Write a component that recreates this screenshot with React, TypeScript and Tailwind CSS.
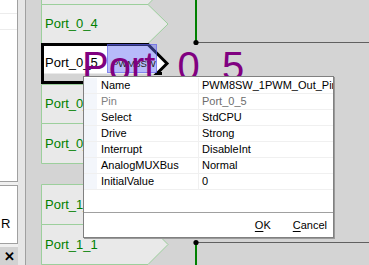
import React from "react";

const rows: { name: string; value: string; dim?: boolean }[] = [
  { name: "Name", value: "PWM8SW_1PWM_Out_Pin" },
  { name: "Pin", value: "Port_0_5", dim: true },
  { name: "Select", value: "StdCPU" },
  { name: "Drive", value: "Strong" },
  { name: "Interrupt", value: "DisableInt" },
  { name: "AnalogMUXBus", value: "Normal" },
  { name: "InitialValue", value: "0" },
];

function portPoints(top: number, bottom: number) {
  const mid = (top + bottom) / 2;
  return `15.5,${top + 0.5} 122,${top + 0.5} 142,${mid} 122,${bottom - 0.5} 15.5,${bottom - 0.5}`;
}

const ports: { label: string; top: number; bottom: number }[] = [
  { label: "Port_0_4", top: 4, bottom: 44 },
  { label: "Port_0_6", top: 84, bottom: 124 },
  { label: "Port_0_7", top: 123, bottom: 164 },
  { label: "Port_1_0", top: 184, bottom: 225 },
  { label: "Port_1_1", top: 224, bottom: 265 },
];

export default function App() {
  return (
    <div className="relative flex h-[265px] w-[369px] overflow-hidden bg-[#f0f0f0] font-['Liberation_Sans',Arial,sans-serif] text-black">
      {/* left panel */}
      <div className="flex w-[18px] flex-col bg-[#f0f0f0]">
        <div className="h-[182px] border-b border-r border-[#a0a0a0] bg-white">
          <div className="h-[14px] border-b border-[#ececec]" />
          <div className="h-[16px] border-b border-[#ececec]" />
        </div>
        <div className="mt-[3px] h-[59px] overflow-hidden border-b border-r border-t border-[#a0a0a0] bg-white pl-[1px] pt-[30px] text-[13px] leading-[15px]">
          R
        </div>
        <div className="mt-[3px] flex flex-1 items-center justify-center bg-[#d2d2d2] pl-[1px] text-[13px] font-bold leading-none">
          ✕
        </div>
      </div>
      {/* splitter */}
      <div className="w-[8px] border-r border-[#a0a0a0] bg-[#e6e6e6]" />
      {/* canvas */}
      <div className="relative flex-1 bg-[#d4d4d4]">
        <svg className="absolute left-0 top-0" width="343" height="265" viewBox="0 0 343 265">
          <polygon points="15.5,-36 122,-36 142,-16 122,4.5 15.5,4.5" fill="#e9e9e9" stroke="#9ccf9c" strokeWidth="1" />
          {ports.map((p) => (
            <polygon key={p.label} points={portPoints(p.top, p.bottom)} fill="#e9e9e9" stroke="#9ccf9c" strokeWidth="1" />
          ))}
          {/* selected port */}
          <polygon points="16.5,44.5 122,44.5 141,63.5 131,73.5 16.5,73.5" fill="#ffffff" stroke="none" />
          <polyline points="16.5,84 16.5,44.5 122,44.5 141,63.5 131,73.5 136,73.5" fill="none" stroke="#000" strokeWidth="3" />
          <polyline points="16.5,82.5 60,82.5" fill="none" stroke="#000" strokeWidth="3" />
          {/* wires */}
          <line x1="170" y1="0" x2="170" y2="42" stroke="#008000" strokeWidth="2" />
          <line x1="170" y1="42.5" x2="343" y2="42.5" stroke="#606060" strokeWidth="1" />
          <circle cx="170" cy="42.5" r="2.6" fill="#000" />
          <line x1="170" y1="242" x2="170" y2="265" stroke="#008000" strokeWidth="2" />
          <line x1="170" y1="242.5" x2="343" y2="242.5" stroke="#606060" strokeWidth="1" />
          <circle cx="170" cy="242.5" r="2.6" fill="#000" />
        </svg>
        {ports.map((p) => (
          <div
            key={p.label}
            className="absolute left-[19px] text-[13px] leading-[15px] text-[#008000]"
            style={{ top: (p.top + p.bottom) / 2 - 8 }}
          >
            {p.label}
          </div>
        ))}
        <div className="absolute left-[19px] top-[55px] text-[13px] leading-[15px] text-black">Port_0_5</div>
        {/* selection box */}
        <div className="absolute left-[81px] top-[44px] h-[29px] w-[50px] border border-[rgba(90,90,230,0.55)] bg-[rgba(95,105,245,0.45)]" />
        <div className="absolute left-[86px] top-[58px] text-[9.5px] leading-[11px] text-[#222]">PWM8SW</div>
        {/* big label */}
        <div className="absolute left-[56px] top-[46px] whitespace-nowrap text-[40px] leading-[40px] text-[#800080]">
          Port_0_5
        </div>
      </div>

      {/* property dialog */}
      <div className="absolute left-[83px] top-[76px] flex h-[162px] w-[251px] flex-col border border-[#808080] bg-white text-[11px] leading-[13px] shadow-[1px_1px_0_#9a9a9a]">
        <div className="flex flex-col pt-[1px]">
          {rows.map((r) => (
            <div key={r.name} className="flex h-[16px] border-b border-[#f0f0f0]">
              <div className="w-[13px] bg-[#f3f6fb]" />
              <div className={`flex w-[102px] items-center border-r border-[#f0f0f0] pl-[4px] ${r.dim ? "text-[#808080]" : ""}`}>
                {r.name}
              </div>
              <div className={`flex flex-1 items-center overflow-hidden whitespace-nowrap pl-[3px] ${r.dim ? "text-[#6d6d6d]" : ""}`}>
                {r.value}
              </div>
            </div>
          ))}
        </div>
        <div className="flex-1" />
        <div className="flex h-[25px] items-center justify-end gap-[22px] border-t border-[#a0a0a0] pr-[6px]">
          <span>
            <span className="underline underline-offset-2">O</span>K
          </span>
          <span>
            <span className="underline underline-offset-2">C</span>ancel
          </span>
        </div>
      </div>
    </div>
  );
}
